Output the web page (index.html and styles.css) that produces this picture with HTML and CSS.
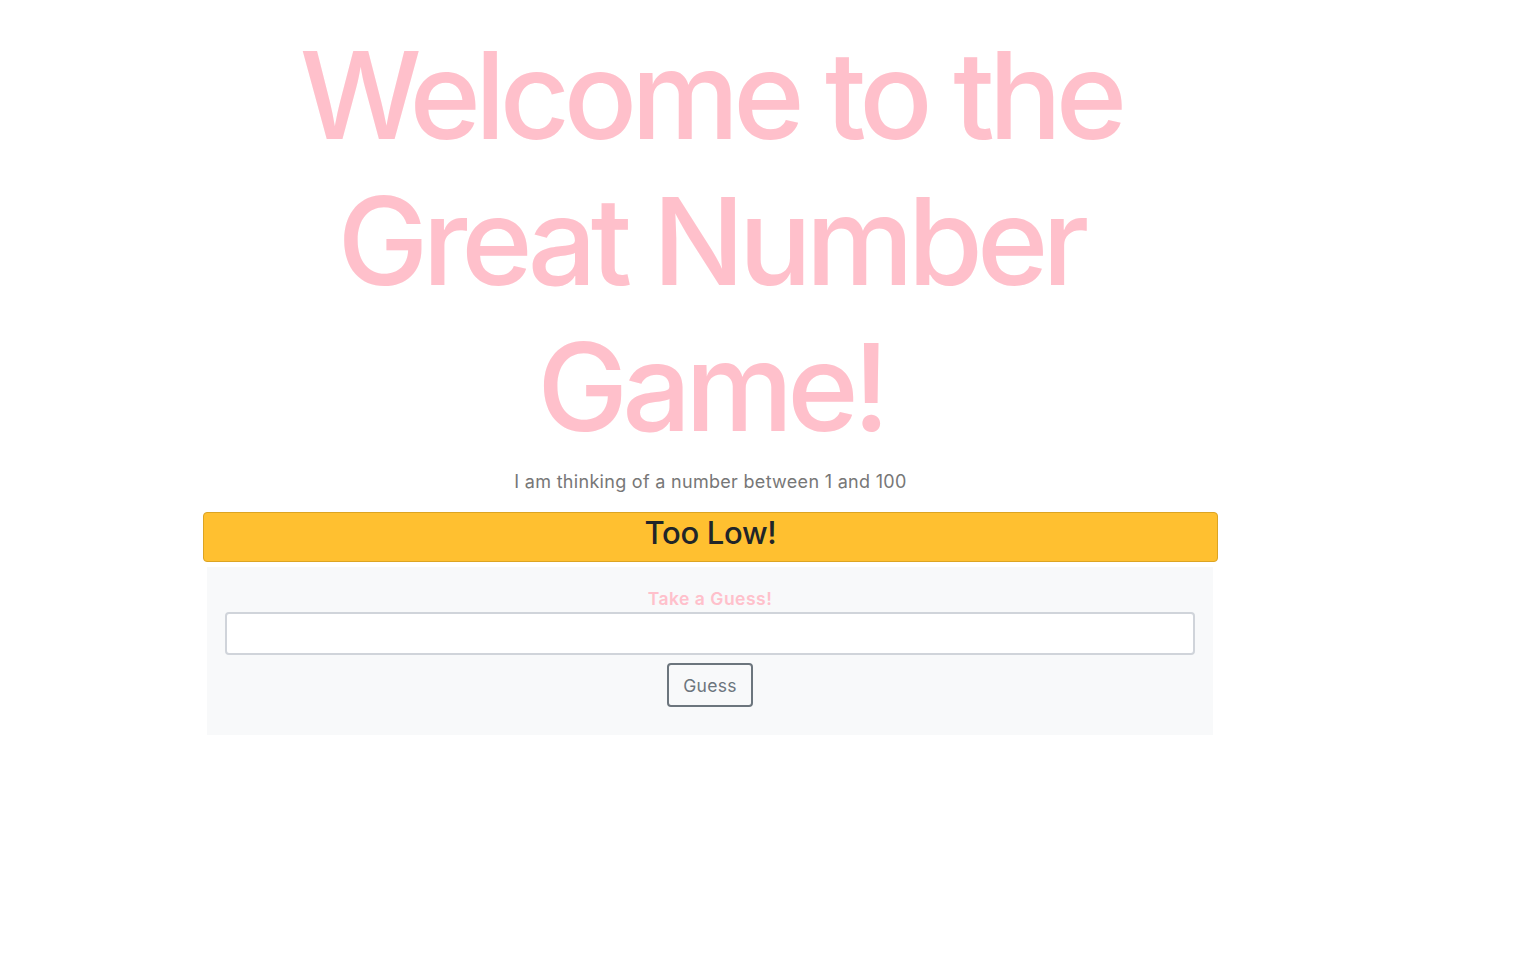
FILE: index.html
```html
<!DOCTYPE html>
<html lang="en">
<head>
<meta charset="utf-8">
<title>Great Number Game</title>
<link rel="stylesheet" href="styles.css">
</head>
<body>
<main class="page">
  <h1 class="title">Welcome to the Great Number Game!</h1>
  <p class="lead">I am thinking of a number between 1 and 100</p>
  <div class="alert">Too Low!</div>
  <form class="guess-box">
    <label class="guess-label" for="guess">Take a Guess!</label>
    <input class="guess-input" id="guess" type="text" name="guess">
    <button class="guess-btn" type="button">Guess</button>
  </form>
</main>
</body>
</html>
```

FILE: styles.css
```css
* { box-sizing: border-box; }
html, body { margin: 0; padding: 0; background: #fff; }
body {
  font-family: Inter, "Noto Sans", "Liberation Sans", sans-serif;
  color: #212529;
}
.page {
  width: 1015px;
  margin-left: 203px;
  display: flex;
  flex-direction: column;
  align-items: stretch;
}
.title {
  margin: 22px 0 0;
  padding: 0 60px;
  text-align: center;
  font-size: 121.6px;
  line-height: 146px;
  font-weight: 500;
  color: #ffc0cb;
  letter-spacing: -6px;
}
.lead {
  margin: 10px 0 0;
  text-align: center;
  font-size: 18px;
  line-height: 24px;
  color: #777;
  letter-spacing: 0.3px;
}
.alert {
  margin-top: 18px;
  height: 50px;
  background: #ffc030;
  border: 1.5px solid #dca423;
  border-radius: 4px;
  text-align: center;
  font-size: 31px;
  line-height: 39px;
  font-weight: 500;
  color: #212529;
  letter-spacing: -0.3px;
}
.guess-box {
  margin: 5px 5px 0 4px;
  height: 168px;
  background: #f8f9fa;
  padding: 20px 18px 0;
  display: flex;
  flex-direction: column;
  align-items: center;
}
.guess-label {
  font-size: 17.5px;
  line-height: 24px;
  font-weight: 600;
  color: #ffc0cb;
  letter-spacing: 0.5px;
}
.guess-input {
  margin-top: 1px;
  width: 100%;
  height: 43px;
  border: 2px solid #d0d4da;
  border-radius: 4px;
  background: #fff;
  font: inherit;
}
.guess-btn {
  margin-top: 8px;
  width: 86px;
  height: 44px;
  border: 2px solid #6c757d;
  border-radius: 4px;
  background: transparent;
  color: #6c757d;
  font-family: inherit;
  font-size: 17.5px;
  letter-spacing: 0.3px;
}
```
